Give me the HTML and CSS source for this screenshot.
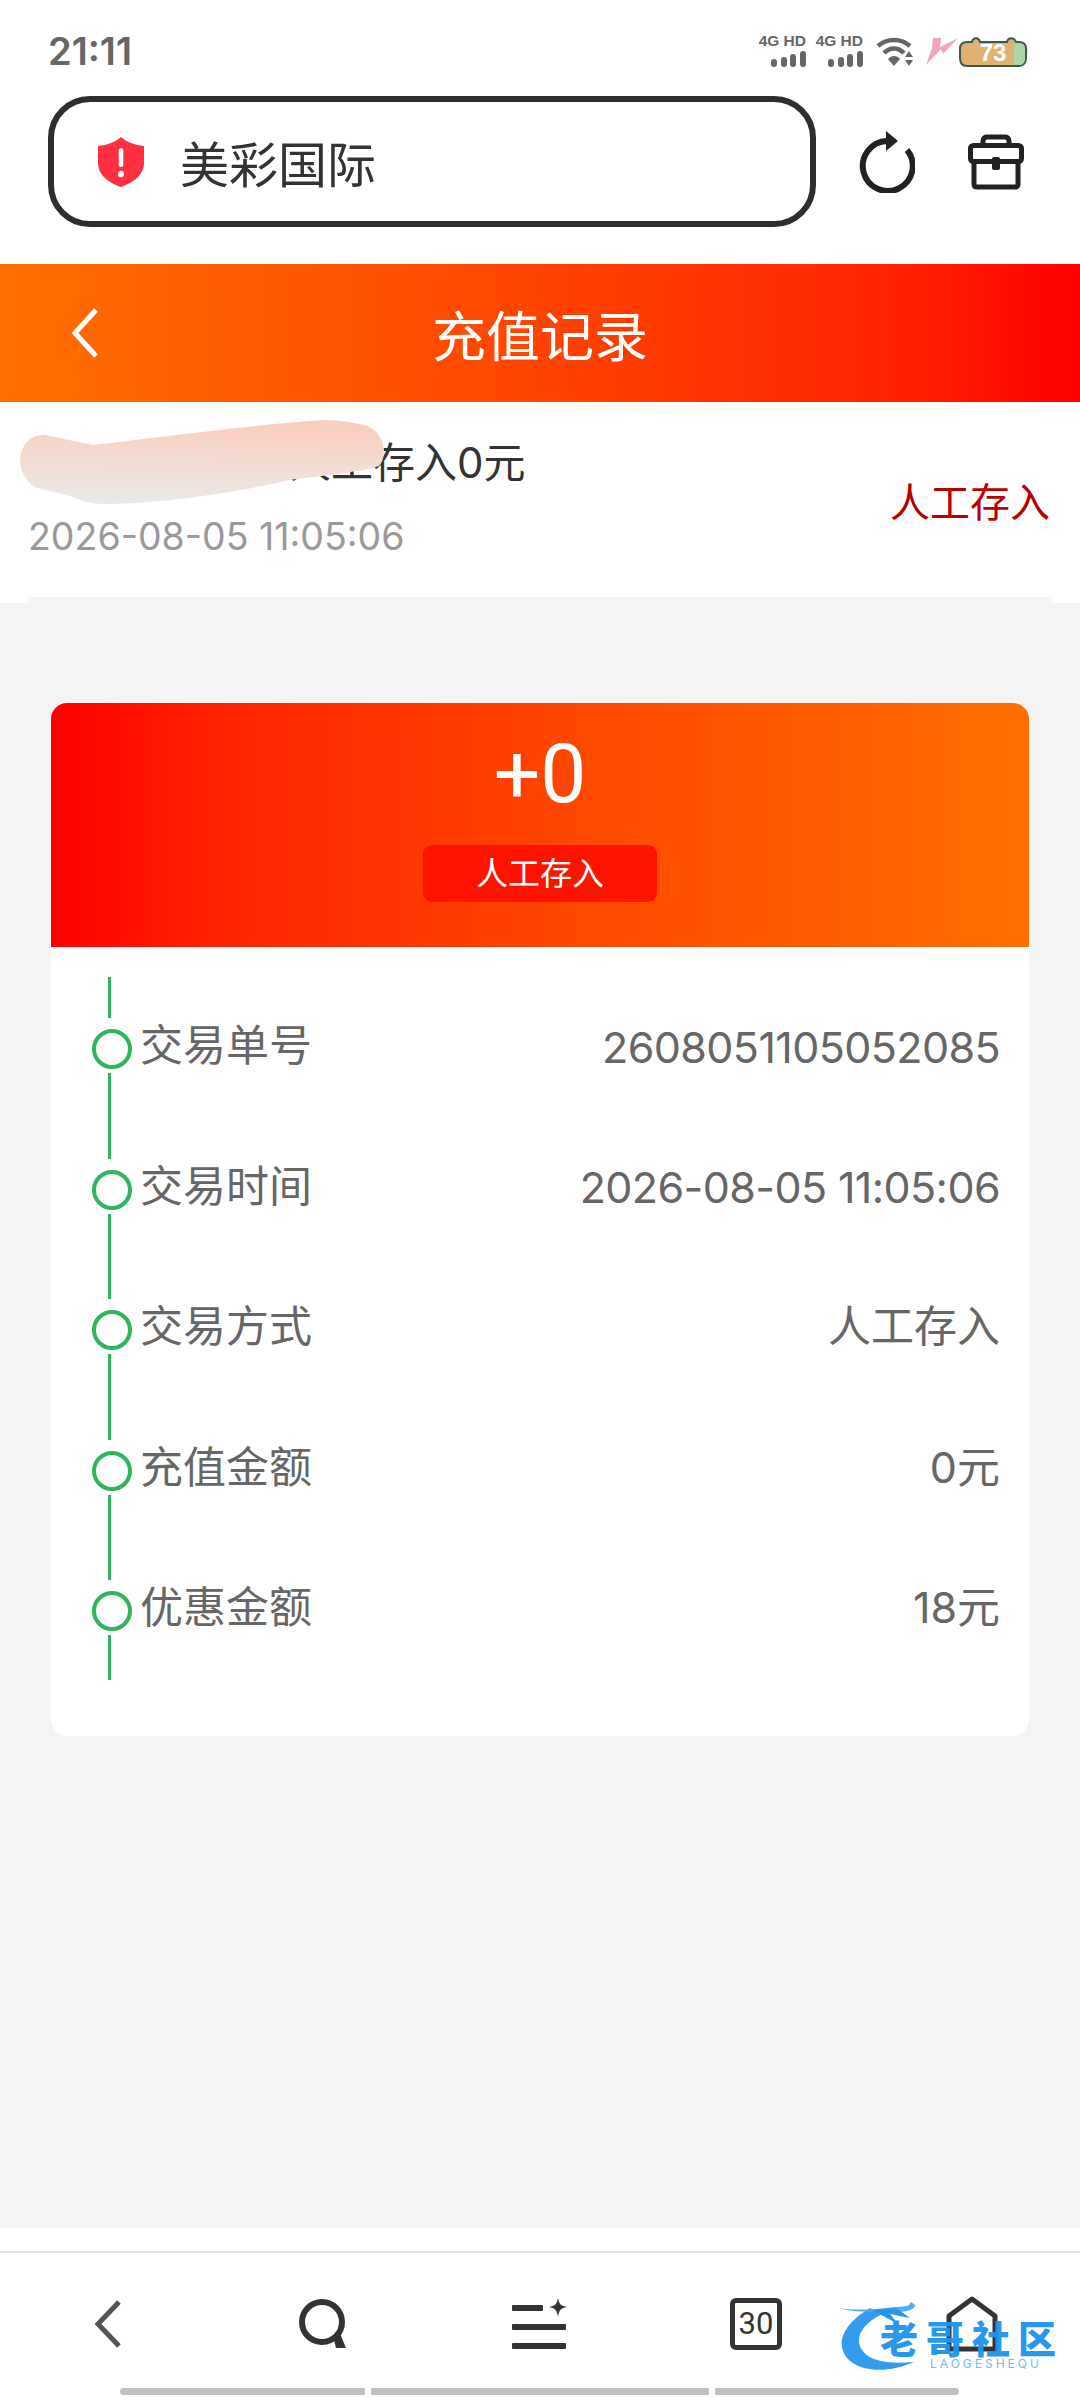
FILE: index.html
```html
<!DOCTYPE html>
<html>
<head>
    <meta charset="UTF-8">
    <title>充值记录</title>
    <link rel="stylesheet" href="styles.css">
</head>
<body>
    <div class="top">
        <div class="status-bar">
            <span class="time">21:11</span>
            <div class="status-icons">
                <div class="signal">
                    <span class="signal-label">4G HD</span>
                    <svg class="signal-bars" width="35" height="16" viewBox="0 0 35 16"><g fill="#666"><rect x="0" y="8" width="6" height="8" rx="3"/><rect x="10" y="6" width="6" height="10" rx="3"/><rect x="19" y="3" width="6" height="13" rx="3"/><rect x="29" y="0" width="6" height="16" rx="3"/></g></svg>
                </div>
                <div class="signal">
                    <span class="signal-label">4G HD</span>
                    <svg class="signal-bars" width="35" height="16" viewBox="0 0 35 16"><g fill="#666"><rect x="0" y="8" width="6" height="8" rx="3"/><rect x="10" y="6" width="6" height="10" rx="3"/><rect x="19" y="3" width="6" height="13" rx="3"/><rect x="29" y="0" width="6" height="16" rx="3"/></g></svg>
                </div>
                <svg class="wifi" width="38" height="30" viewBox="0 0 38 30"><g fill="none" stroke="#666" stroke-width="4.5"><path d="M2 9C11 1 25 1 34 9"/><path d="M8 16C14 10 22 10 28 16"/></g><path d="M12 22C15 18 21 18 24 22L18 29Z" fill="#666"/><path d="M33 14L37 20H29ZM29 23H37L33 29Z" fill="#666"/></svg>
                <svg class="bolt" width="32" height="27" viewBox="0 0 32 27"><path d="M7 0H15L14 9L32 0L17 16L15 11L0 27L6 10Z" fill="#f2a5b8"/></svg>
                <svg class="battery" width="71" height="31" viewBox="0 0 71 31">
                    <path d="M66 10C70 11 70 19 66 20Z" fill="#f7c6c6"/>
                    <path d="M8 6H13C14 1 20 1 21 6H48C49 1 55 1 57 6H60C65 6 67 9 67 13V22C67 27 64 30 60 30H8C3 30 1 27 1 22V13C1 9 3 6 8 6Z" fill="#e1b172" stroke="#3d5a4c" stroke-width="2"/>
                    <path d="M55 7H60C64 7 66 10 66 13V22C66 26 64 29 60 29H55Z" fill="#abd5a6"/>
                    <text class="battery-text" x="34" y="25">73</text>
                </svg>
            </div>
        </div>
        <div class="address-row">
            <div class="address-bar">
                <svg class="shield" width="46" height="50" viewBox="0 0 50 50" preserveAspectRatio="none">
                    <path d="M25 0C31 5 40 8 50 9V26C50 38 38 46 25 50C12 46 0 38 0 26V9C10 8 19 5 25 0Z" fill="#ff3042"/>
                    <rect x="22.5" y="11" width="5" height="19" rx="2.5" fill="#fff"/>
                    <circle cx="25" cy="37" r="3.2" fill="#fff"/>
                </svg>
                <span class="address-text">美彩国际</span>
            </div>
            <svg class="reload" width="56" height="62" viewBox="0 0 56 62">
                <path d="M48 19A25 25 0 1 1 28 10" fill="none" stroke="#222" stroke-width="6"/>
                <path d="M27 0L39 10L27 20Z" fill="#222"/>
            </svg>
            <svg class="case" width="56" height="56" viewBox="0 0 56 56">
                <g fill="none" stroke="#222" stroke-width="5">
                    <path d="M15 12V7C15 4 17 3 19 3H37C39 3 41 4 41 7V12"/>
                    <rect x="2.5" y="11.5" width="51" height="16" rx="3"/>
                    <path d="M6 27V50C6 52 7 53 9 53H47C49 53 50 52 50 50V27"/>
                </g>
                <rect x="24" y="23" width="8" height="13" rx="2" fill="#222"/>
            </svg>
        </div>
    </div>

    <div class="nav">
        <svg class="nav-back" width="30" height="50" viewBox="0 0 30 50"><path d="M26 2L5 25L26 48" fill="none" stroke="#fff" stroke-width="5"/></svg>
        <h1 class="nav-title">充值记录</h1>
        <span></span>
    </div>

    <div class="record">
        <div class="record-row">
            <div class="record-left">
                <p class="record-title"><span class="record-masked"></span>人工存入0元</p>
                <p class="record-date">2026-08-05 11:05:06</p>
            </div>
            <span class="record-type">人工存入</span>
        </div>
        <svg class="smudge" width="370" height="84" viewBox="0 0 370 84">
            <defs>
                <linearGradient id="smudgeFill" x1="0.55" y1="0" x2="0.45" y2="1">
                    <stop offset="0" stop-color="#fbcdbb"/>
                    <stop offset="1" stop-color="#ebe9e8"/>
                </linearGradient>
            </defs>
            <path d="M0 39C2 22 12 14 25 15L73 25C150 16 230 5 304 0C318 0 335 3 345 5C358 9 364 22 364 30C364 38 362 43 359 46C340 52 300 56 269 60C220 72 140 84 83 84C70 84 60 80 50 76L14 67C6 60 0 52 0 39Z" fill="url(#smudgeFill)"/>
        </svg>
    </div>

    <div class="content">
        <div class="card">
            <div class="card-head">
                <div class="card-amount">+0</div>
                <div class="card-tag">人工存入</div>
            </div>
            <div class="card-body">
                <div class="step">
                    <div class="step-mark"><i class="step-line"></i><i class="step-dot"></i><i class="step-line step-line-end"></i></div>
                    <span class="step-label">交易单号</span>
                    <span class="step-num">2608051105052085</span>
                </div>
                <div class="step">
                    <div class="step-mark"><i class="step-line"></i><i class="step-dot"></i><i class="step-line step-line-end"></i></div>
                    <span class="step-label">交易时间</span>
                    <span class="step-num">2026-08-05 11:05:06</span>
                </div>
                <div class="step">
                    <div class="step-mark"><i class="step-line"></i><i class="step-dot"></i><i class="step-line step-line-end"></i></div>
                    <span class="step-label">交易方式</span>
                    <span class="step-value">人工存入</span>
                </div>
                <div class="step">
                    <div class="step-mark"><i class="step-line"></i><i class="step-dot"></i><i class="step-line step-line-end"></i></div>
                    <span class="step-label">充值金额</span>
                    <span class="step-value">0元</span>
                </div>
                <div class="step">
                    <div class="step-mark"><i class="step-line"></i><i class="step-dot"></i><i class="step-line step-line-end"></i></div>
                    <span class="step-label">优惠金额</span>
                    <span class="step-value">18元</span>
                </div>
            </div>
        </div>
    </div>

    <div class="bottom">
        <div class="toolbar">
            <svg width="30" height="48" viewBox="0 0 30 48"><path d="M26 2L5 24L26 46" fill="none" stroke="#555" stroke-width="5"/></svg>
            <svg width="52" height="52" viewBox="0 0 52 52"><circle cx="24" cy="24" r="20" fill="none" stroke="#333" stroke-width="6"/><path d="M35 38L38 50H48L41 33Z" fill="#333"/></svg>
            <svg width="56" height="52" viewBox="0 0 56 52">
                <g fill="#333"><rect x="0" y="7" width="31" height="6" rx="1"/><rect x="0" y="26" width="54" height="6" rx="1"/><rect x="0" y="45" width="54" height="6" rx="1"/></g>
                <path d="M46 0C47 6 49 8 55 9C49 10 47 12 46 19C45 12 43 10 37 9C43 8 45 6 46 0Z" fill="#333"/>
            </svg>
            <div class="tab-count">30</div>
            <svg width="52" height="56" viewBox="0 0 52 56"><path d="M26 3L49 20V53H3V20Z" fill="none" stroke="#333" stroke-width="5" stroke-linejoin="round"/></svg>
        </div>
        <div class="gesture">
            <i class="gesture-bar gesture-left"></i>
            <i class="gesture-bar gesture-mid"></i>
            <i class="gesture-bar gesture-right"></i>
        </div>
        <div class="watermark">
            <svg class="watermark-logo" width="120" height="70" viewBox="0 0 120 70">
                <path d="M32 6C8 20 -4 40 9 56C22 71 52 71 76 60C52 62 32 60 24 48C16 36 24 22 44 12Z" fill="#2a97ee"/>
                <path d="M0 6C20 12 40 8 60 10C72 10 84 4 72 0C74 6 60 4 48 6C30 8 14 8 0 6Z" fill="#4aa8f2"/>
                <path d="M34 8L60 22L52 12L72 16L58 6Z" fill="#1d8fea"/>
            </svg>
            <span class="watermark-name">老哥社区</span>
            <span class="watermark-sub">LAOGESHEQU</span>
        </div>
    </div>
</body>
</html>
```

FILE: styles.css
```css
body {
    font-family: Inter, "Noto Sans CJK SC", sans-serif;
    background-color: #f4f4f4;
    margin: 0;
    width: 1080px;
    height: 2400px;
    display: flex;
    flex-direction: column;
    overflow: hidden;
}

.top {
    background-color: #fff;
    height: 264px;
    flex-shrink: 0;
}

.status-bar {
    height: 96px;
    box-sizing: border-box;
    padding: 32px 50px 0 48px;
    display: flex;
    justify-content: space-between;
    align-items: flex-start;
}

.time {
    font-size: 38px;
    font-weight: 600;
    line-height: 38px;
    color: #666;
}

.status-icons {
    display: flex;
    align-items: flex-start;
    margin-top: 2px;
}

.signal {
    width: 47px;
    margin-right: 10px;
    display: flex;
    flex-direction: column;
    align-items: flex-end;
}

.signal-label {
    font-family: "Liberation Sans", sans-serif;
    font-size: 15.5px;
    font-weight: 700;
    line-height: 14px;
    white-space: nowrap;
    color: #666;
}

.signal-bars {
    margin-top: 3px;
}

.wifi {
    margin: 3px 12px 0 3px;
}

.bolt {
    margin: 4px 1px 0 0;
}

.battery {
    margin-top: 2px;
}

.battery-text {
    font-family: "Liberation Sans", sans-serif;
    font-size: 24px;
    font-weight: 700;
    fill: #fff;
    text-anchor: middle;
}

.address-row {
    height: 131px;
    padding-left: 48px;
    display: flex;
    align-items: center;
}

.address-bar {
    width: 768px;
    height: 131px;
    box-sizing: border-box;
    border: 6px solid #2e2e2e;
    border-radius: 42px;
    padding-left: 44px;
    display: flex;
    align-items: center;
}

.address-text {
    margin-left: 36px;
    font-size: 49px;
    color: #333;
}

.reload {
    margin-left: 43px;
}

.case {
    margin-left: 53px;
}

.nav {
    height: 138px;
    flex-shrink: 0;
    background: linear-gradient(to left, #ff0000, #ff2500 18%, #ff4400 50%, #ff6f00);
    display: grid;
    grid-template-columns: 1fr auto 1fr;
    align-items: center;
}

.nav-back {
    margin-left: 70px;
}

.nav-title {
    margin: 0;
    font-size: 54px;
    font-weight: 400;
    color: #fff;
}

.record {
    position: relative;
    background-color: #fff;
    height: 201px;
    flex-shrink: 0;
    padding: 0 28px;
}

.record-row {
    height: 195px;
    border-bottom: 6px solid #f4f4f4;
    display: flex;
    justify-content: space-between;
    align-items: center;
}

.record-left {
    padding-bottom: 5px;
}

.record-title {
    margin: 0;
    font-size: 42px;
    line-height: 56px;
    color: #333;
}

.record-masked {
    display: inline-block;
    width: 261px;
}

.record-date {
    margin: 24px 0 0;
    font-size: 37.5px;
    line-height: 44px;
    color: #999;
}

.record-type {
    margin-right: 2px;
    font-size: 40px;
    color: #b80000;
}

.smudge {
    position: absolute;
    left: 20px;
    top: 18px;
}

.content {
    flex: 1;
    padding: 100px 51px 0;
}

.card {
    background-color: #fff;
    border-radius: 16px;
    overflow: hidden;
}

.card-head {
    height: 244px;
    background: linear-gradient(to right, #ff0000, #ff2500 18%, #ff4400 50%, #ff6f00);
    display: flex;
    flex-direction: column;
    align-items: center;
}

.card-amount {
    margin-top: 26px;
    font-family: Roboto, sans-serif;
    font-size: 82px;
    line-height: 90px;
    color: #fff;
}

.card-tag {
    margin-top: 26px;
    width: 234px;
    height: 57px;
    border-radius: 9px;
    background-color: #ff1200;
    font-size: 32px;
    line-height: 57px;
    text-align: center;
    color: #fff;
}

.card-body {
    padding: 30px 29px 56px 41px;
}

.step {
    height: 140.5px;
    display: flex;
    align-items: center;
    font-size: 43px;
    color: #666;
}

.step-mark {
    width: 40px;
    height: 100%;
    margin-right: 8px;
    display: flex;
    flex-direction: column;
}

.step-line {
    display: block;
    width: 3px;
    height: 41px;
    margin-left: 16px;
    background-color: #30b45c;
}

.step-line-end {
    flex: 1;
}

.step-dot {
    display: block;
    flex-shrink: 0;
    width: 40px;
    height: 40px;
    box-sizing: border-box;
    margin: 11px 0 4px;
    border: 4px solid #30b45c;
    border-radius: 50%;
}

.step-label {
    flex: 1;
    margin-top: -10px;
}

.step-value {
    margin-top: -10px;
}

.step-num {
    margin-top: -1px;
    letter-spacing: -0.6px;
}

.bottom {
    position: relative;
    background-color: #fff;
    height: 172px;
    flex-shrink: 0;
    box-sizing: border-box;
    padding-top: 23px;
}

.toolbar {
    height: 137px;
    box-sizing: border-box;
    padding-top: 7px;
    border-top: 2px solid #e6e6e6;
    display: grid;
    grid-template-columns: repeat(5, 216px);
    justify-items: center;
    align-items: center;
}

.tab-count {
    width: 52px;
    height: 52px;
    box-sizing: border-box;
    border: 5px solid #333;
    border-radius: 6px;
    font-family: Roboto, sans-serif;
    font-size: 31px;
    line-height: 42px;
    text-align: center;
    color: #333;
}

.gesture {
    padding-left: 120px;
    display: flex;
    gap: 6px;
}

.gesture-bar {
    display: block;
    height: 7px;
    background-color: #c0c0c0;
}

.gesture-left {
    width: 245px;
    border-radius: 4px 0 0 4px;
}

.gesture-mid {
    width: 338px;
}

.gesture-right {
    width: 244px;
    border-radius: 0 4px 4px 0;
}

.watermark {
    position: absolute;
    left: 838px;
    top: 74px;
    width: 222px;
    height: 70px;
    opacity: 0.95;
}

.watermark-logo {
    position: absolute;
    left: 0;
    top: 0;
}

.watermark-name {
    position: absolute;
    left: 42px;
    top: 22px;
    font-size: 38px;
    font-weight: 900;
    line-height: 30px;
    letter-spacing: 8px;
    white-space: nowrap;
    color: #1d92ec;
}

.watermark-sub {
    position: absolute;
    left: 92px;
    top: 55px;
    font-size: 12px;
    line-height: 13px;
    letter-spacing: 3px;
    white-space: nowrap;
    color: #6cb8f0;
}
```
